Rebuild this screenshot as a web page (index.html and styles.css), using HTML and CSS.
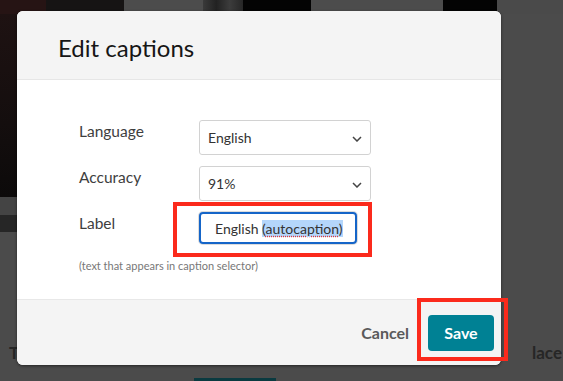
FILE: index.html
```html
<!DOCTYPE html>
<html lang="en">
<head>
  <meta charset="UTF-8">
  <title>Edit captions</title>
  <link rel="stylesheet" href="styles.css">
</head>
<body>
  <div class="page-behind">
    <div class="strip">
      <div class="seg seg-red"></div>
      <div class="seg seg-dark"></div>
      <div class="seg seg-gray"></div>
      <div class="seg seg-streak"></div>
      <div class="seg seg-black"></div>
      <div class="seg seg-gray2"></div>
      <div class="seg seg-black2"></div>
      <div class="seg seg-gray3"></div>
    </div>
    <div class="behind-row">
      <div class="video-edge"></div>
      <div class="video-bar"></div>
      <div class="video-controls"></div>
    </div>
    <div class="behind-text">
      <span>T</span>
      <span>lace</span>
    </div>
    <div class="behind-button"></div>
  </div>

  <div class="modal">
    <header class="modal-header">
      <h1>Edit captions</h1>
    </header>

    <div class="modal-body">
      <div class="form-row">
        <label>Language</label>
        <div class="select">
          <span>English</span>
          <svg class="chevron" viewBox="0 0 10 6" width="10" height="6"><path d="M1 1l4 4 4-4" fill="none" stroke="#444" stroke-width="1.5"/></svg>
        </div>
      </div>
      <div class="form-row">
        <label>Accuracy</label>
        <div class="select">
          <span>91%</span>
          <svg class="chevron" viewBox="0 0 10 6" width="10" height="6"><path d="M1 1l4 4 4-4" fill="none" stroke="#444" stroke-width="1.5"/></svg>
        </div>
      </div>
      <div class="form-row form-row-label">
        <label>Label</label>
        <div class="text-input">English <span class="sel">(<span class="typo">autocaption</span>)</span></div>
      </div>
      <p class="hint">(text that appears in caption selector)</p>
    </div>

    <footer class="modal-footer">
      <button class="btn-cancel">Cancel</button>
      <button class="btn-save">Save</button>
    </footer>
  </div>

  <div class="mark mark-label"></div>
  <div class="mark mark-save"></div>
</body>
</html>
```

FILE: styles.css
```css
body {
  margin: 0;
  width: 563px;
  height: 381px;
  overflow: hidden;
  position: relative;
  background-color: #4b4b4b;
  font-family: 'Lato', 'Liberation Sans', sans-serif;
}

/* page behind the dialog */
.strip {
  display: flex;
  height: 14px;
}

.seg { height: 100%; }
.seg-red { width: 46px; background: #261414; }
.seg-dark { width: 78px; background: #161414; }
.seg-gray { width: 79px; background: #4c4c4c; }
.seg-streak { width: 40px; background: linear-gradient(90deg, #3a3a3a, #222, #3c3c3c, #262626); }
.seg-black { width: 68px; background: #030303; }
.seg-gray2 { width: 132px; background: #4c4c4c; }
.seg-black2 { width: 54px; background: #030303; }
.seg-gray3 { flex: 1; background: #4a4a4a; }

.behind-row {
  width: 17px;
  height: 218px;
}

.video-edge {
  height: 183px;
  background: linear-gradient(180deg, #1e1212, #140e0e 60%, #0c0a0a);
}

.video-bar {
  height: 18px;
  background: #444;
}

.video-controls {
  height: 17px;
  background: #262626;
}

.behind-text {
  display: flex;
  justify-content: space-between;
  padding: 110px 0 0 9px;
  font-size: 17px;
  font-weight: 700;
  color: #262626;
}

.behind-text span:last-child {
  margin-right: 1px;
}

.behind-button {
  width: 82px;
  height: 4px;
  margin: 15px 0 0 194px;
  background: #0a3a40;
}

/* dialog */
.modal {
  position: absolute;
  left: 17px;
  top: 11px;
  width: 484px;
  height: 354px;
  border-radius: 6px;
  overflow: hidden;
  background: #fff;
  display: flex;
  flex-direction: column;
  box-shadow: 0 1px 3px rgba(0, 0, 0, 0.5);
}

.modal-header {
  height: 69px;
  padding: 4px 0 0 41px;
  box-sizing: border-box;
  display: flex;
  align-items: center;
  background: #f4f4f4;
  border-bottom: 1px solid #e6e6e6;
}

.modal-header h1 {
  margin: 0;
  font-size: 24px;
  font-weight: 400;
  color: #161616;
}

.modal-body {
  flex: 1;
  padding: 40px 0 0 62px;
}

.form-row {
  display: flex;
  margin-bottom: 11px;
}

.form-row-label {
  margin-top: 3px;
  margin-bottom: 0;
}

.form-row label {
  width: 120px;
  padding-top: 1px;
  font-size: 15.5px;
  line-height: 20px;
  color: #3e3e3e;
}

.select {
  position: relative;
  width: 172px;
  height: 35px;
  box-sizing: border-box;
  padding: 0 8px;
  display: flex;
  align-items: center;
  border: 1px solid #d2d2d2;
  border-radius: 3px;
  font-size: 14px;
  color: #333;
}

.chevron {
  position: absolute;
  right: 8px;
  top: 15px;
}

.text-input {
  width: 158px;
  height: 32px;
  box-sizing: border-box;
  padding: 0 0 0 14px;
  display: flex;
  align-items: center;
  white-space: pre;
  border: 2px solid #1565c8;
  border-radius: 4px;
  box-shadow: 0 0 0 1px #dcdcdc;
  font-size: 14px;
  color: #333;
}

.sel {
  background: #b4d6fb;
  line-height: 17px;
}

.typo {
  text-decoration: underline dotted #e43b3b;
  text-underline-offset: 2px;
}

.hint {
  margin: 15px 0 0;
  font-size: 11px;
  color: #777;
}

.modal-footer {
  height: 66px;
  box-sizing: border-box;
  padding: 0 7px 0 0;
  display: flex;
  align-items: center;
  justify-content: flex-end;
  gap: 19px;
  background: #f4f4f4;
  border-top: 1px solid #e8e8e8;
}

.btn-cancel {
  border: none;
  background: none;
  padding: 0;
  font-family: inherit;
  font-size: 16px;
  font-weight: 700;
  color: #5a5a5a;
}

.btn-save {
  width: 66px;
  height: 36px;
  border: none;
  border-radius: 4px;
  background: #008194;
  font-family: inherit;
  font-size: 16px;
  font-weight: 700;
  color: #fff;
}

/* red annotation boxes */
.mark {
  position: absolute;
  border: 4px solid #fb2a1c;
  box-sizing: border-box;
}

.mark-label {
  left: 173px;
  top: 202px;
  width: 199px;
  height: 55px;
}

.mark-save {
  left: 417px;
  top: 298px;
  width: 91px;
  height: 63px;
}
```
